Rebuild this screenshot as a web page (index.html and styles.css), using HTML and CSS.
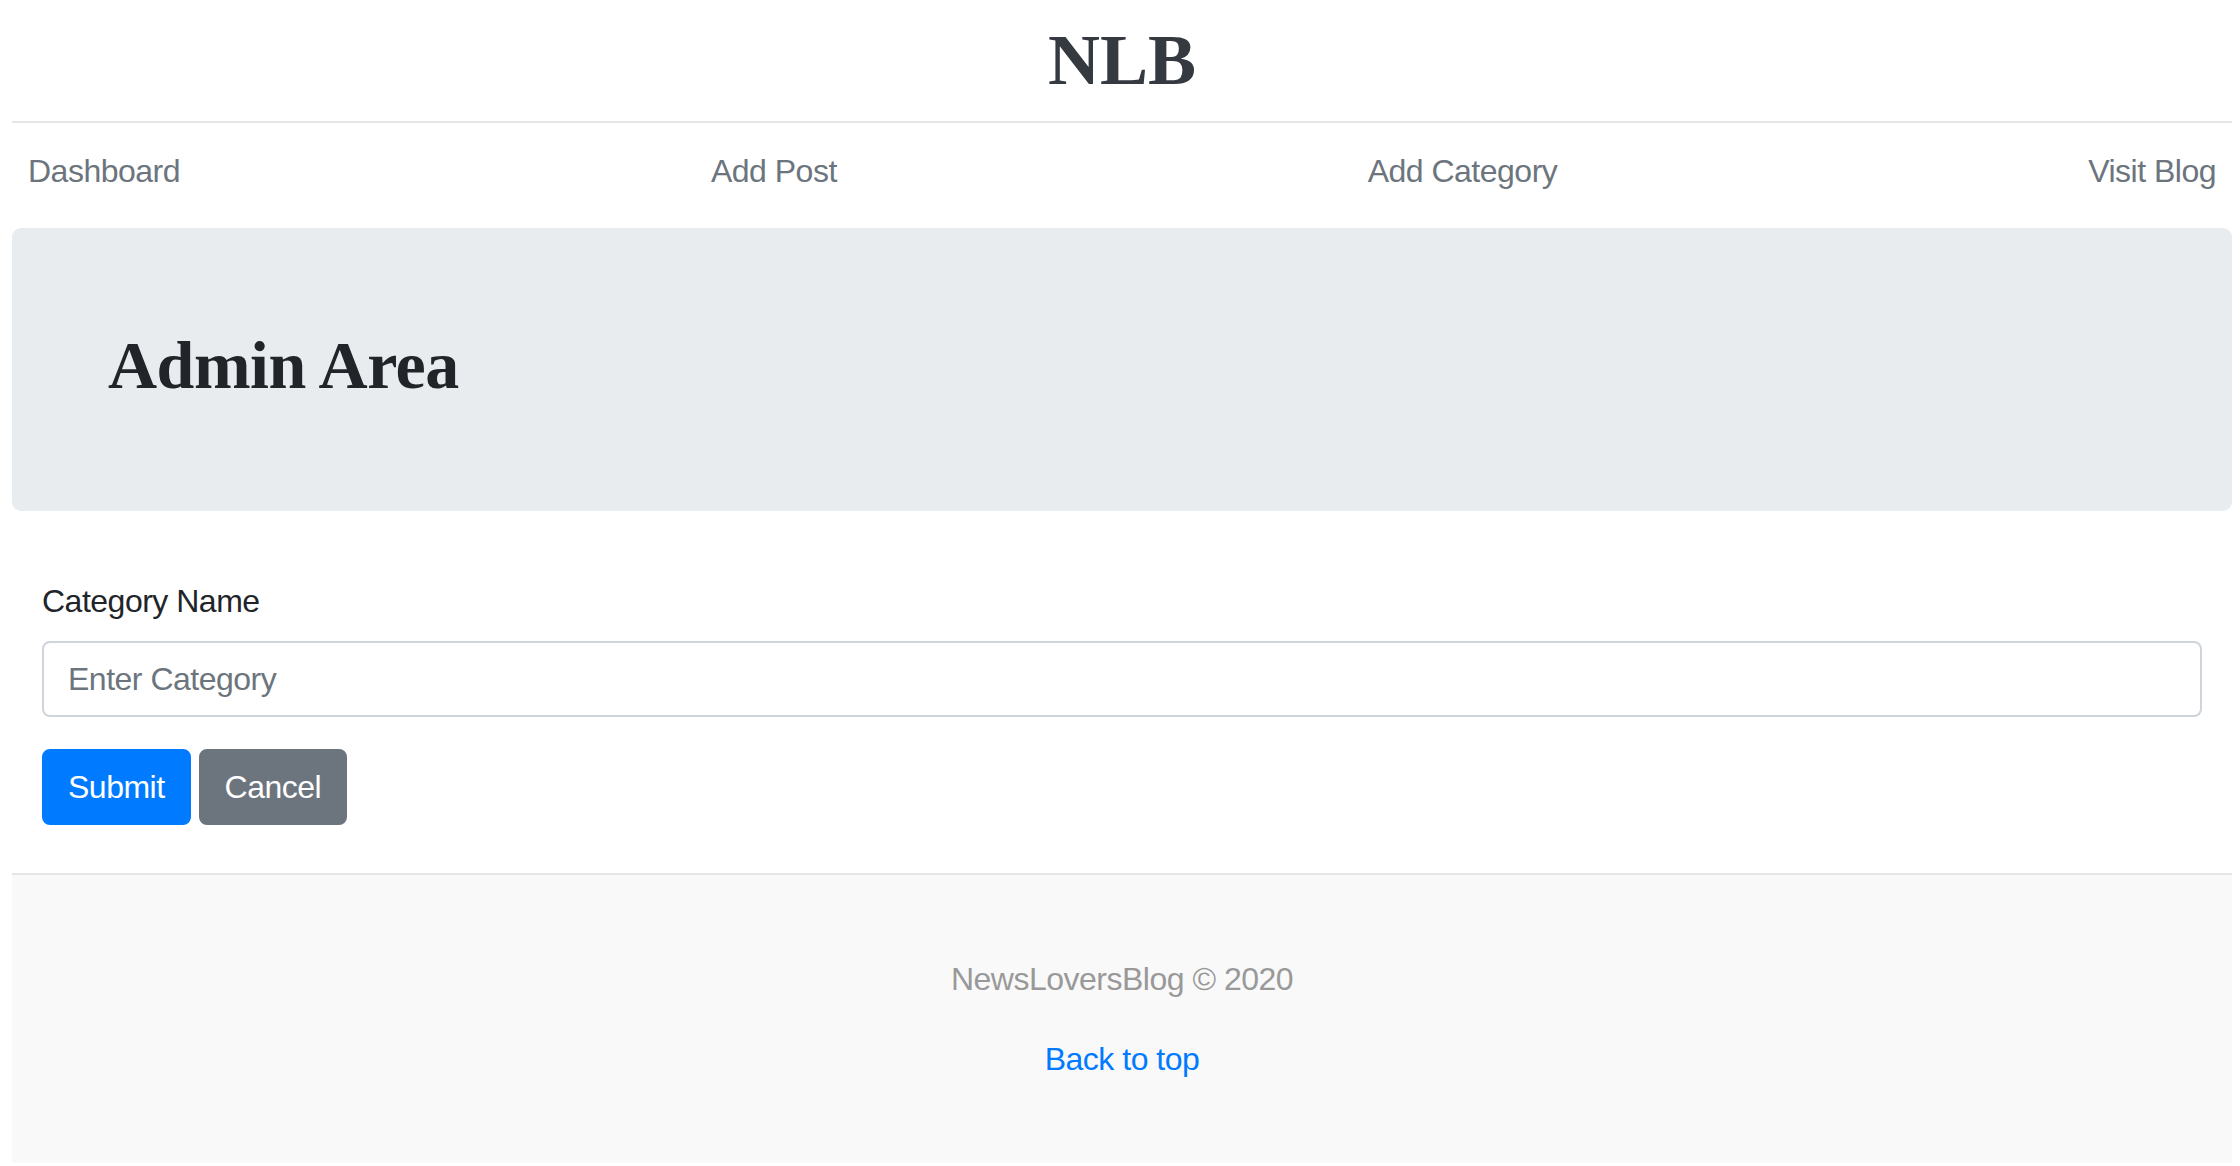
FILE: index.html
```
<!DOCTYPE html>
<html lang="en">
<head>
<meta charset="utf-8">
<title>NLB Admin</title>
<link rel="stylesheet" href="styles.css">
</head>
<body>
<div class="page">
  <header class="blog-header">
    <a class="logo" href="#">NLB</a>
  </header>
  <div class="nav-scroller">
    <nav class="nav">
      <a class="nav-link" href="#">Dashboard</a>
      <a class="nav-link" href="#">Add Post</a>
      <a class="nav-link" href="#">Add Category</a>
      <a class="nav-link" href="#">Visit Blog</a>
    </nav>
  </div>
  <div class="jumbotron">
    <h1 class="jumbo-title">Admin Area</h1>
  </div>
  <main class="content">
    <form class="form">
      <div class="form-group">
        <label class="label" for="cat">Category Name</label>
        <input class="form-control" id="cat" type="text" placeholder="Enter Category">
      </div>
      <div class="actions">
        <button type="button" class="btn btn-primary">Submit</button>
        <button type="button" class="btn btn-secondary">Cancel</button>
      </div>
    </form>
  </main>
  <footer class="blog-footer">
    <p class="footer-text">NewsLoversBlog © 2020</p>
    <p class="footer-text"><a class="footer-link" href="#">Back to top</a></p>
  </footer>
</div>
</body>
</html>
```

FILE: styles.css
```
* { box-sizing: border-box; }
html, body { margin: 0; padding: 0; background: #fff; }
body {
  font-family: "Liberation Sans", Arial, sans-serif;
  font-size: 32px;
  line-height: 1.5;
  letter-spacing: -0.5px;
  color: #212529;
}
.page {
  margin: 0 8px 0 12px;
}
.blog-header {
  padding: 24px 0 25px;
  line-height: 1;
  text-align: center;
  border-bottom: 2px solid #e5e5e5;
}
.logo {
  font-family: "Liberation Serif", "Times New Roman", serif;
  font-weight: 700;
  font-size: 72px;
  letter-spacing: 0;
  color: #343a40;
  text-decoration: none;
}
.nav-scroller {
  padding: 8px 0 0;
  margin-bottom: 17px;
}
.nav {
  display: flex;
  justify-content: space-between;
}
.nav-link {
  display: block;
  padding: 16px;
  color: #6c757d;
  text-decoration: none;
}
.jumbotron {
  background: #e9ecef;
  border-radius: 9px;
  padding: 95px 96px 104px;
}
.jumbo-title {
  margin: 0;
  font-family: "Liberation Serif", "Times New Roman", serif;
  font-weight: 700;
  font-size: 68px;
  line-height: 84px;
  letter-spacing: -0.5px;
  color: #212529;
}
.content {
  padding: 66px 30px 48px;
}
.form-group {
  margin-bottom: 32px;
}
.label {
  display: block;
  margin-bottom: 16px;
}
.form-control {
  display: block;
  width: 100%;
  height: 76px;
  padding: 12px 24px;
  font-family: inherit;
  font-size: 32px;
  line-height: 1.5;
  letter-spacing: -0.5px;
  color: #495057;
  background: #fff;
  border: 2px solid #ced4da;
  border-radius: 8px;
  outline: none;
}
.form-control::placeholder {
  color: #6c757d;
  opacity: 1;
}
.actions {
  display: flex;
  gap: 8px;
}
.btn {
  font-family: inherit;
  font-size: 32px;
  line-height: 1.5;
  letter-spacing: -0.5px;
  padding: 12px 24px;
  border: 2px solid transparent;
  border-radius: 8px;
  color: #fff;
  cursor: pointer;
}
.btn-primary {
  background: #007bff;
  border-color: #007bff;
}
.btn-secondary {
  background: #6c757d;
  border-color: #6c757d;
}
.blog-footer {
  padding: 80px 0;
  text-align: center;
  color: #999;
  background: #f9f9f9;
  border-top: 2px solid #e5e5e5;
}
.footer-text {
  margin: 0 0 32px;
}
.footer-text:last-child {
  margin-bottom: 0;
}
.footer-link {
  color: #007bff;
  text-decoration: none;
}
```
